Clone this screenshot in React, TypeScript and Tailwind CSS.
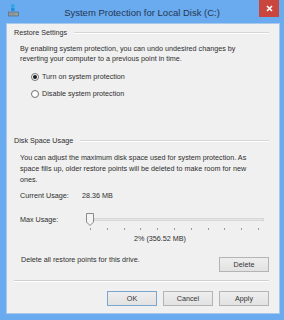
const ticks = Array.from({ length: 11 }, (_, i) => i);

const DriveIcon = () => (
  <svg width="11" height="13" viewBox="0 0 11 13" className="ml-[8px] mt-[4px]">
    <path d="M3 0.5 L6.5 0 L6.5 3.5 L3 3.8 Z" fill="#2aa7e8" />
    <path d="M3 4.2 L6.5 4 L6.5 7 L3 6.8 Z" fill="#1d8fd6" />
    <rect x="0.5" y="8" width="10" height="4" fill="#8d969c" stroke="#5d666c" strokeWidth="0.6" />
    <rect x="7.5" y="9.6" width="1.6" height="0.9" fill="#7ee07a" />
  </svg>
);

const Radio = ({ checked, label }: { checked?: boolean; label: string }) => (
  <div className="flex h-[10px] items-center gap-[3px]">
    <span className="flex h-[8px] w-[8px] items-center justify-center rounded-full border border-[#6f6f6f] bg-white">
      {checked && <span className="h-[4px] w-[4px] rounded-full bg-[#1a1a1a]" />}
    </span>
    <span>{label}</span>
  </div>
);

const GroupHeader = ({ title }: { title: string }) => (
  <div className="flex h-[10px] items-center gap-[7px] pl-[7px] pr-[10px]">
    <span className="whitespace-nowrap">{title}</span>
    <span className="h-[2px] flex-1 border-t border-b border-t-[#d5d5d5] border-b-white" />
  </div>
);

const Btn = ({ label, primary }: { label: string; primary?: boolean }) => (
  <button
    className={`flex h-[15px] w-[50px] items-center justify-center border bg-gradient-to-b from-[#eeeeee] to-[#e2e2e2] text-[7.2px] text-[#333] ${
      primary ? "border-[#7ba7cf]" : "border-[#b4b4b4]"
    }`}
  >
    {label}
  </button>
);

export default function App() {
  return (
    <div className="flex h-[320px] w-[284px] flex-col bg-[#6aaaee] font-['Liberation_Sans',Arial,sans-serif] text-[7.2px] leading-[10px] text-[#2e2e2e]">
      {/* title bar */}
      <div className="grid h-[23px] shrink-0 grid-cols-[1fr_auto_1fr] items-start">
        <DriveIcon />
        <div className="pt-[7px] text-[9.5px] leading-[12px] text-[#223754]">System Protection for Local Disk (C:)</div>
        <div className="flex justify-end pr-[5px]">
          <button className="flex h-[17px] w-[20px] items-center justify-center bg-[#c9463f]">
            <svg width="7" height="7" viewBox="0 0 7 7">
              <path d="M1 1 L6 6 M6 1 L1 6" stroke="white" strokeWidth="1.6" />
            </svg>
          </button>
        </div>
      </div>

      <div className="ml-[6px] mr-[4px] flex flex-1 flex-col border border-[#a9c9ec] bg-[#f0f0f0] pt-[4px]">
        <GroupHeader title="Restore Settings" />
        <p className="mt-[6px] pl-[13px]">
          By enabling system protection, you can undo undesired changes by
          <br />
          reverting your computer to a previous point in time.
        </p>
        <div className="mt-[8px] flex flex-col gap-[7px] pl-[24px]">
          <Radio checked label="Turn on system protection" />
          <Radio label="Disable system protection" />
        </div>

        <div className="mt-[37px]">
          <GroupHeader title="Disk Space Usage" />
        </div>
        <p className="mt-[6px] pl-[13px] leading-[11px]">
          You can adjust the maximum disk space used for system protection. As
          <br />
          space fills up, older restore points will be deleted to make room for new
          <br />
          ones.
        </p>

        <div className="mt-[6px] flex pl-[13px]">
          <span className="w-[62px]">Current Usage:</span>
          <span>28.36 MB</span>
        </div>

        <div className="mt-[12px] flex items-start pl-[13px]">
          <span className="mt-[2px] w-[66px]">Max Usage:</span>
          <div className="flex w-[178px] flex-col">
            <div className="flex items-center">
              <svg width="8" height="13" viewBox="0 0 8 13" className="shrink-0">
                <path d="M0.5 0.5 H7.5 V9 L4 12.5 L0.5 9 Z" fill="#f4f4f4" stroke="#8a8a8a" strokeWidth="1" />
              </svg>
              <div className="h-[3px] flex-1 border border-[#d6d6d6] bg-[#e7e7e7]" />
            </div>
            <div className="mt-[2px] flex justify-between pl-[4px] pr-[5px]">
              {ticks.map((t) => (
                <span key={t} className="h-[2px] w-[1px] bg-[#9a9a9a]" />
              ))}
            </div>
          </div>
        </div>

        <div className="mt-[4px] pl-[127px]">2% (356.52 MB)</div>

        <div className="mt-[13px] flex items-start pl-[14px] pr-[10px]">
          <span className="mt-[-2px] flex-1">Delete all restore points for this drive.</span>
          <Btn label="Delete" />
        </div>

        <div className="mx-[7px] mt-[8px] mr-[10px] h-[2px] border-t border-b border-t-[#cfcfcf] border-b-white" />

        <div className="mt-[9px] flex justify-end gap-[6px] pr-[10px]">
          <Btn label="OK" primary />
          <Btn label="Cancel" />
          <Btn label="Apply" />
        </div>
      </div>
      <div className="h-[6px] shrink-0" />
    </div>
  );
}
